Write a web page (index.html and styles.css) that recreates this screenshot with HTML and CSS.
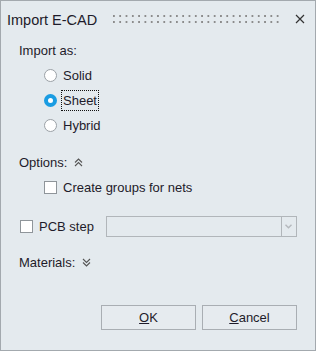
FILE: index.html
```html
<!DOCTYPE html>
<html lang="en">
<head>
    <meta charset="UTF-8">
    <title>Import E-CAD</title>
    <link rel="stylesheet" href="styles.css">
</head>
<body>
    <div class="dialog">
        <div class="titlebar">
            <span class="title">Import E-CAD</span>
            <div class="grip"></div>
            <svg class="close" width="10" height="10" viewBox="0 0 10 10">
                <path d="M1 1 L9 9 M9 1 L1 9" stroke="#333" stroke-width="1.2" fill="none"/>
            </svg>
        </div>

        <div class="content">
            <div class="row">Import as:</div>
            <div class="row indent">
                <span class="radio"></span><span class="label">Solid</span>
            </div>
            <div class="row indent">
                <span class="radio checked"></span><span class="label focus">Sheet</span>
            </div>
            <div class="row indent">
                <span class="radio"></span><span class="label">Hybrid</span>
            </div>

            <div class="row section">
                Options:
                <svg class="chev" width="9" height="9" viewBox="0 0 9 9">
                    <path d="M1 4.5 L4.5 1 L8 4.5 M1 8 L4.5 4.5 L8 8" stroke="#555" stroke-width="1.1" fill="none"/>
                </svg>
            </div>
            <div class="row indent">
                <span class="check"></span><span class="label">Create groups for nets</span>
            </div>

            <div class="row pcb">
                <span class="check"></span><span class="label">PCB step</span>
                <div class="combo">
                    <div class="combo-btn">
                        <svg width="7" height="5" viewBox="0 0 7 5">
                            <path d="M0.5 0.8 L3.5 3.8 L6.5 0.8" stroke="#b4b8bc" stroke-width="1.4" fill="none"/>
                        </svg>
                    </div>
                </div>
            </div>

            <div class="row materials">
                Materials:
                <svg class="chev" width="9" height="9" viewBox="0 0 9 9">
                    <path d="M1 1 L4.5 4.5 L8 1 M1 4.5 L4.5 8 L8 4.5" stroke="#555" stroke-width="1.1" fill="none"/>
                </svg>
            </div>

            <div class="buttons">
                <button><u>O</u>K</button>
                <button><u>C</u>ancel</button>
            </div>
        </div>
    </div>
</body>
</html>
```

FILE: styles.css
```css
body {
    margin: 0;
    font-family: "Liberation Sans", Arial, sans-serif;
    font-size: 13px;
    color: #1e1b2a;
}
.dialog {
    box-sizing: border-box;
    width: 316px;
    height: 351px;
    background: #e4eaee;
    border: 1px solid #a3a9ae;
}
.titlebar {
    display: flex;
    align-items: center;
    height: 36px;
    padding: 0 10px 0 6px;
}
.title {
    font-size: 14.5px;
    margin-top: 1px;
}
.grip {
    flex: 1;
    height: 8px;
    margin: 0 14px 0 16px;
    background:
        linear-gradient(to bottom, transparent 2px, #e4eaee 2px) 0 0 / 100% 6px,
        linear-gradient(to right, #8c8c8c 2px, transparent 2px) 0 0 / 6.3px 100%;
}
.close {
    display: block;
}
.content {
    padding: 1px 18px 0 18px;
}
.row {
    display: flex;
    align-items: center;
    height: 25px;
    white-space: nowrap;
}
.indent {
    padding-left: 25px;
}
.radio {
    box-sizing: border-box;
    flex-shrink: 0;
    width: 13px;
    height: 13px;
    border: 1px solid #9ba1a6;
    border-radius: 50%;
    background: #fff;
}
.radio.checked {
    border: 4px solid #1a9ce2;
}
.check {
    box-sizing: border-box;
    flex-shrink: 0;
    width: 13px;
    height: 13px;
    border: 1px solid #8f959a;
    background: #fff;
}
.label {
    margin-left: 4px;
    padding: 2px 1px;
    border: 1px solid transparent;
}
.label.focus {
    border: 1px dotted #111;
}
.section {
    margin-top: 12px;
}
.chev {
    margin-left: 7px;
}
.pcb {
    margin-top: 14px;
    padding-left: 1px;
}
.combo {
    box-sizing: border-box;
    display: flex;
    flex-shrink: 0;
    justify-content: flex-end;
    width: 191px;
    height: 21px;
    margin-left: 10px;
    border: 1px solid #b1b6ba;
}
.combo-btn {
    display: flex;
    align-items: center;
    justify-content: center;
    width: 14px;
    border-left: 1px solid #b1b6ba;
}
.materials {
    margin-top: 11px;
}
.buttons {
    display: flex;
    justify-content: flex-end;
    gap: 6px;
    margin-top: 30px;
}
button {
    width: 95px;
    height: 25px;
    padding: 0;
    font-family: inherit;
    font-size: 13px;
    color: #1e1b2a;
    background: #e6ebef;
    border: 1px solid #a9aeb3;
    border-radius: 0;
}
```
